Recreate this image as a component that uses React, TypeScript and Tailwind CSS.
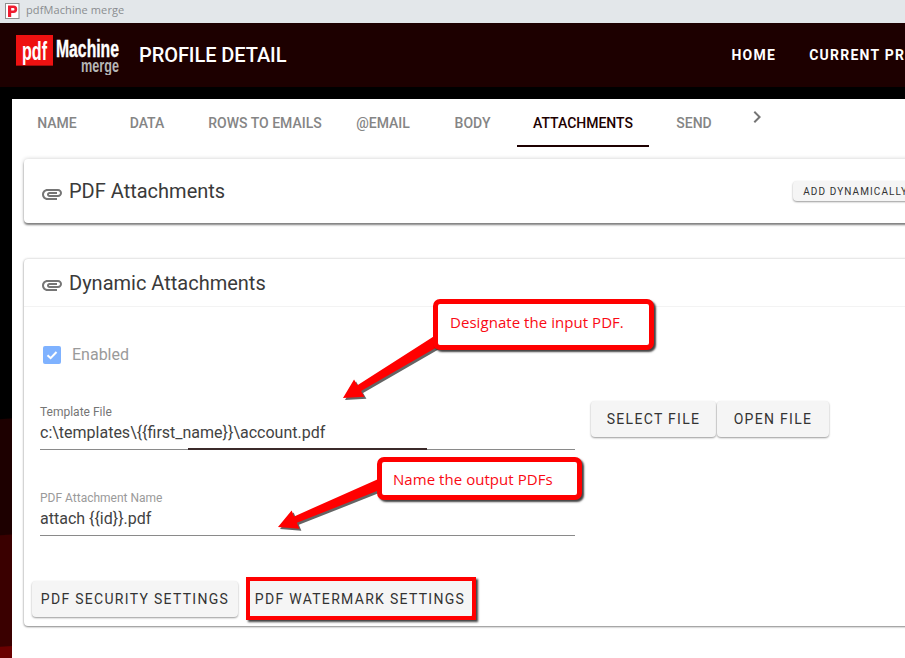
const roboto = { fontFamily: "Roboto, sans-serif" };

function Clip() {
  return (
    <svg width="24" height="24" viewBox="0 0 24 24" className="shrink-0 mt-[5px]" fill="#757575">
      <path d="M2 12.5C2 9.46 4.46 7 7.5 7H18c2.21 0 4 1.79 4 4s-1.79 4-4 4H9.5C8.12 15 7 13.88 7 12.5S8.12 10 9.5 10H17v2H9.41c-.55 0-.55 1 0 1H18c1.1 0 2-.9 2-2s-.9-2-2-2H7.5C5.57 9 4 10.57 4 12.5S5.57 16 7.5 16H17v2H7.5C4.46 18 2 15.54 2 12.5z" />
    </svg>
  );
}

function Arrow({ x1, y1, x2, y2 }: { x1: number; y1: number; x2: number; y2: number }) {
  const a = Math.atan2(y2 - y1, x2 - x1);
  const px = -Math.sin(a);
  const py = Math.cos(a);
  const hl = 19;
  const hw = 10;
  const sw = 3.5;
  const st = 5.5;
  const bx = x2 - Math.cos(a) * hl;
  const by = y2 - Math.sin(a) * hl;
  const pts = [
    [x1 + px * st, y1 + py * st],
    [bx + px * sw, by + py * sw],
    [bx + px * hw, by + py * hw],
    [x2, y2],
    [bx - px * hw, by - py * hw],
    [bx - px * sw, by - py * sw],
    [x1 - px * st, y1 - py * st],
  ]
    .map((p) => p.join(","))
    .join(" ");
  return (
    <svg width={905} height={658} className="absolute left-0 top-0 pointer-events-none">
      <polygon points={pts} fill="#222" opacity="0.7" transform="translate(2 2)" />
      <polygon points={pts} fill="#ff0000" />
    </svg>
  );
}

function Callout({ className, children }: { className: string; children: string }) {
  return (
    <div className={"absolute bg-white border-[5px] border-[#ff0000] rounded-[7px] shadow-[2px_2px_2px_rgba(0,0,0,0.75)] text-[#fa0a14] text-[15px] tracking-[0.05px] leading-[20px] flex items-center " + className} style={{ fontFamily: "'Open Sans', 'Noto Sans', sans-serif" }}>
      {children}
    </div>
  );
}

function Btn({ children, className = "" }: { children: string; className?: string }) {
  return (
    <button className={"h-[36px] rounded bg-[#f5f5f5] text-[#333] text-[14px] font-normal tracking-[1.3px] whitespace-nowrap shadow-[0_1px_2px_rgba(0,0,0,0.4)] " + className}>
      {children}
    </button>
  );
}

function Field({ label, value, labelColor, children }: { label: string; value: string; labelColor: string; children?: React.ReactNode }) {
  return (
    <div className="relative w-[535px] h-[45px] border-b border-[#8a8a8a]">
      <div className={"text-[12px] leading-[14px] " + labelColor}>{label}</div>
      <div className="text-[16px] leading-[24px] mt-[2px] text-[#424242]">{value}</div>
      {children}
    </div>
  );
}

const tabs = [
  ["NAME", "w-[90px]"],
  ["DATA", "w-[90px]"],
  ["ROWS TO EMAILS", "w-[146px]"],
  ["@EMAIL", "w-[90px]"],
  ["BODY", "w-[89px]"],
];

export default function App() {
  return (
    <div className="relative w-[905px] h-[658px] overflow-hidden bg-black" style={roboto}>
      <div className="h-[23px] bg-[#e3e7ea] flex items-center pl-[5px] gap-[6px]">
        <svg width="15" height="16" viewBox="0 0 15 16" className="-mt-[2px]">
          <rect x="0.5" y="0.5" width="13.5" height="15" fill="#fff" stroke="#8f8f8f" />
          <path d="M3 2.5h5.5a3.6 3.6 0 0 1 0 7.4H6.2V14H3z M6.2 5v2.6h2a1.3 1.3 0 0 0 0-2.6z" fill="#ee1c30" fillRule="evenodd" />
        </svg>
        <span className="text-[11px] text-[#8a8d90] tracking-[0.1px] -mt-[3px]" style={{ fontFamily: "'Open Sans', sans-serif" }}>pdfMachine merge</span>
      </div>

      <header className="h-[64px] bg-[#1d0000] flex items-center pl-[16px] overflow-hidden">
        <svg width="104" height="40" viewBox="0 0 104 40" className="shrink-0 mt-[-1px]" style={{ fontFamily: "'Liberation Sans', sans-serif", fontWeight: 700 }}>
          <rect x="0" y="0" width="37" height="31" fill="#ee1111" />
          <rect x="0" y="30" width="37" height="1" fill="#a00c0c" />
          <text x="6" y="25" fontSize="26" fill="#fff" textLength="25" lengthAdjust="spacingAndGlyphs">pdf</text>
          <text x="40" y="22" fontSize="24" fill="#fff" stroke="#fff" strokeWidth="0.4" textLength="63" lengthAdjust="spacingAndGlyphs">Machine</text>
          <text x="65" y="37" fontSize="18" fill="#b5b5b5" textLength="38" lengthAdjust="spacingAndGlyphs">merge</text>
        </svg>
        <h1 className="ml-[19px] text-white text-[20px] font-medium leading-[24px] tracking-[-0.07px] whitespace-nowrap">PROFILE DETAIL</h1>
        <nav className="ml-[445px] flex text-white text-[14px] font-bold tracking-[1.25px] whitespace-nowrap">
          <span>HOME</span>
          <span className="ml-[33px]">CURRENT PROFILE</span>
        </nav>
      </header>

      <div className="flex h-[571px]">
        <div className="w-[12px] shrink-0 bg-[linear-gradient(176deg,#000_0%,#000_58%,#1d0000_58.2%,#1d0000_78.3%,#3a0000_78.5%,#3a0000_97.8%,#6a0000_98%)]" />
        <main className="flex-1 mt-[12px] bg-white text-[14px] overflow-hidden">
          <div className="h-[48px] flex items-center relative">
            {tabs.map(([t, w]) => (
              <div key={t} className={"h-full flex items-center justify-center text-[#858585] text-[14px] font-medium shrink-0 " + w}>{t}</div>
            ))}
            <div className="h-full w-[132px] flex items-center justify-center text-[#1d0000] font-medium border-b-2 border-[#1d0000] pt-[2px] shrink-0">ATTACHMENTS</div>
            <div className="h-full w-[90px] flex items-center justify-center text-[#858585] font-medium shrink-0">SEND</div>
            <svg width="24" height="24" viewBox="0 0 24 24" fill="#757575" className="ml-[6px] -mt-[12px] shrink-0">
              <path d="M10 6 8.59 7.41 13.17 12l-4.58 4.59L10 18l6-6z" />
            </svg>
          </div>

          <section className="ml-[12px] mt-[12px] w-[900px] h-[64px] rounded bg-white flex items-center pl-[16px] shadow-[0_2px_2px_rgba(0,0,0,0.45),0_0_4px_rgba(0,0,0,0.2)]">
            <Clip />
            <h2 className="ml-[5px] text-[20px] text-[#3a3a3a] leading-[24px]">PDF Attachments</h2>
            <button className="ml-[568px] h-[20px] px-[10px] rounded bg-[#f5f5f5] text-[#333] text-[10px] font-normal tracking-[1.1px] whitespace-nowrap shadow-[0_1px_2px_rgba(0,0,0,0.4)]">ADD DYNAMICALLY</button>
          </section>

          <section className="ml-[12px] mt-[36px] w-[900px] h-[367px] rounded bg-white shadow-[0_1px_2px_rgba(0,0,0,0.4),0_0_3px_rgba(0,0,0,0.2)]">
            <div className="h-[48px] flex items-center pl-[16px] border-b border-[#f3f3f3]">
              <Clip />
              <h2 className="ml-[5px] text-[20px] text-[#3a3a3a] leading-[24px]">Dynamic Attachments</h2>
            </div>
            <div className="pl-[16px] pt-[39px]">
              <label className="flex items-center h-[18px] ml-[3px]">
                <span className="w-[18px] h-[18px] rounded-[2px] bg-[#7fb2ff] flex items-center justify-center">
                  <svg width="14" height="14" viewBox="0 0 14 14" fill="none" stroke="#fff" strokeWidth="2"><path d="M2.5 7.2 5.6 10.2 11.5 4" /></svg>
                </span>
                <span className="ml-[11px] text-[16px] text-[#9a9a9a]">Enabled</span>
              </label>
              <div className="flex mt-[41px] h-[45px]">
                <Field label="Template File" value="c:\templates\{{first_name}}\account.pdf" labelColor="text-[#757575]">
                  <div className="absolute left-[148px] -bottom-px w-[239px] h-[2px] bg-[#3b2a2a]" />
                </Field>
                <div className="flex ml-[16px] -mt-[4px]">
                  <Btn className="w-[125px]">SELECT FILE</Btn>
                  <Btn className="w-[112px] ml-[1px]">OPEN FILE</Btn>
                </div>
              </div>
              <div className="mt-[41px]">
                <Field label="PDF Attachment Name" value="attach {{id}}.pdf" labelColor="text-[#9a9a9a]" />
              </div>
              <div className="flex mt-[45px] -ml-[8px]">
                <Btn className="w-[206px]">PDF SECURITY SETTINGS</Btn>
                <div className="relative ml-[10px]">
                  <Btn className="w-[224px]">PDF WATERMARK SETTINGS</Btn>
                  <div className="absolute -left-[2px] -right-[4px] -top-[4px] -bottom-[3px] border-[4px] border-[#ff0000] shadow-[2px_2px_2px_rgba(0,0,0,0.75)]" />
                </div>
              </div>
            </div>
          </section>
        </main>
      </div>

      <Arrow x1={440} y1={339} x2={343} y2={398} />
      <Arrow x1={385} y1={482} x2={278} y2={527} />
      <Callout className="left-[433px] top-[299px] w-[221px] h-[51px] pl-[12px] pb-[6px]">Designate the input PDF.</Callout>
      <Callout className="left-[377px] top-[457px] w-[205px] h-[43px] pl-[11px]">Name the output PDFs</Callout>
    </div>
  );
}
